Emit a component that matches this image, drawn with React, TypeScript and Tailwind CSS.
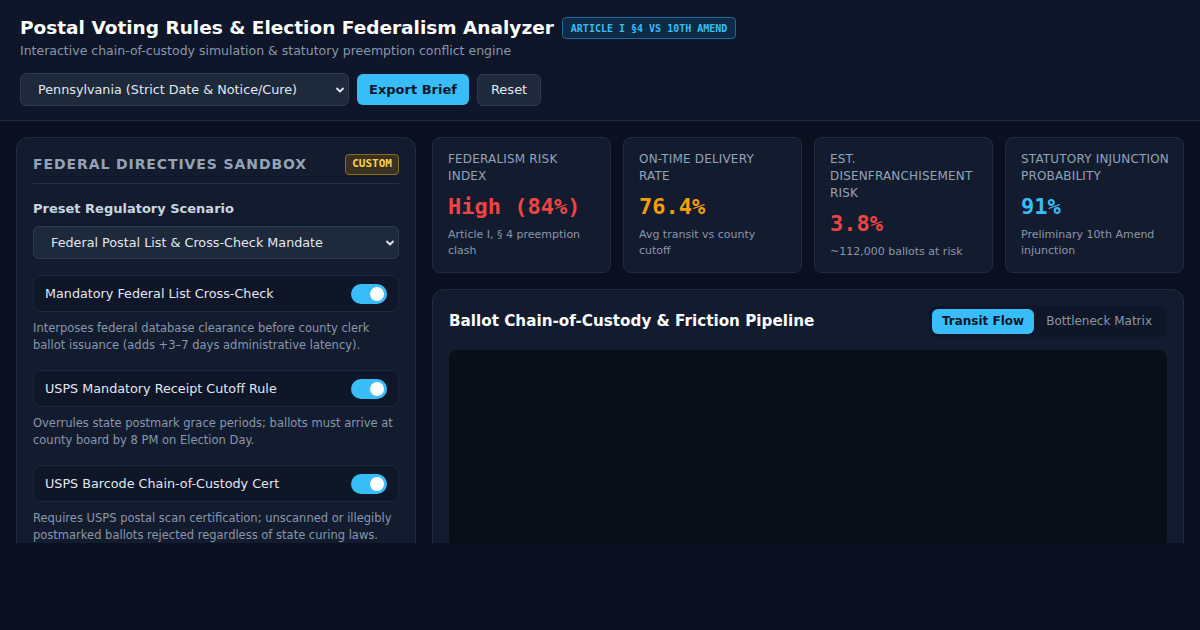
import React from "react";

const sans = { fontFamily: '"DejaVu Sans", "Liberation Sans", sans-serif' };
const mono = { fontFamily: '"DejaVu Sans Mono", "Liberation Mono", monospace' };

function Toggle() {
  return (
    <div className="w-9 h-5 rounded-full bg-[#38bdf8] flex items-center justify-end pr-[3px] shrink-0">
      <div className="w-[14px] h-[14px] rounded-full bg-white" />
    </div>
  );
}

function Chevron({ className = "" }: { className?: string }) {
  return (
    <svg className={className} width="10" height="10" viewBox="0 0 10 10" fill="none">
      <path d="M2 3.5 L5 6.5 L8 3.5" stroke="#e2e8f0" strokeWidth="1.8" strokeLinecap="round" strokeLinejoin="round" />
    </svg>
  );
}

function Rule({ label, desc }: { label: string; desc: string }) {
  return (
    <div className="mt-4">
      <div className="h-[37px] flex items-center justify-between px-[11px] rounded-lg bg-[#0e1628] border border-[#1b2640]">
        <span className="text-[12.75px] text-slate-200">{label}</span>
        <Toggle />
      </div>
      <p className="mt-2 text-[11.5px] leading-[17px] text-[#8a96aa]">{desc}</p>
    </div>
  );
}

function Stat({ label, value, sub, color }: { label: string[]; value: string; sub: string; color: string }) {
  return (
    <div className="rounded-lg bg-[#131c2f] border border-[#1f2b45] pl-[15px] pr-[12px] pt-[13px] pb-3">
      <div className="text-[12px] leading-[17px] tracking-[0.015em] uppercase text-[#94a3b8]">
        {label.map((l) => (
          <div key={l} className="whitespace-nowrap">
            {l}
          </div>
        ))}
      </div>
      <div className={`mt-2 text-[22px] leading-[28px] font-bold ${color}`} style={mono}>
        {value}
      </div>
      <div className="mt-1.5 text-[11px] leading-[16px] text-[#8a96aa]">{sub}</div>
    </div>
  );
}

export default function App() {
  return (
    <div className="w-full h-[630px] bg-[#0b1020]" style={sans}>
      <div className="h-[543px] overflow-hidden">
        <header className="bg-[#0f1629] border-b border-[#1e2a44] px-5 pt-4 pb-[14px]">
          <div className="flex items-center gap-2">
            <h1 className="text-[18.5px] leading-[24px] font-bold text-white">
              Postal Voting Rules &amp; Election Federalism Analyzer
            </h1>
            <span
              className="h-[22px] flex items-center px-2 rounded border border-[#1b6a96] bg-[#0f2a44] text-[10px] font-bold text-[#38bdf8]"
              style={mono}
            >
              ARTICLE I §4 VS 10TH AMEND
            </span>
          </div>
          <p className="mt-[2px] text-[12.5px] leading-[18px] text-[#8a96aa]">
            Interactive chain-of-custody simulation &amp; statutory preemption conflict engine
          </p>
          <div className="mt-[13px] flex items-center gap-2">
            <div className="relative w-[329px] h-[33px] rounded-md bg-[#1e293b] border border-[#2b3b55] flex items-center pl-[17px]">
              <span className="text-[12.75px] text-slate-200">Pennsylvania (Strict Date &amp; Notice/Cure)</span>
              <Chevron className="absolute right-[3px] top-[11px]" />
            </div>
            <button className="h-[31px] px-3 rounded-md bg-[#38bdf8] text-[13px] font-bold text-[#0f172a]">
              Export Brief
            </button>
            <button className="h-[32px] px-[13px] rounded-md bg-[#1e293b] border border-[#2a3954] text-[13px] text-slate-200">
              Reset
            </button>
          </div>
        </header>

        <main className="p-4 flex gap-4 items-start">
          <section className="w-[400px] shrink-0 rounded-xl bg-[#131c2f] border border-[#1f2b45] p-4">
            <div className="flex items-center justify-between pb-2 border-b border-[#243049]">
              <h2 className="text-[14px] font-bold tracking-[0.065em] text-[#94a3b8]">FEDERAL DIRECTIVES SANDBOX</h2>
              <span
                className="h-[21px] flex items-center px-1.5 rounded border border-[#8a6a1f] bg-[#3b3120] text-[11px] font-bold text-[#fcd34d]"
                style={mono}
              >
                CUSTOM
              </span>
            </div>
            <div className="mt-4 text-[13px] leading-[18px] font-bold text-[#cbd5e1]">Preset Regulatory Scenario</div>
            <div className="relative mt-2 h-[33px] rounded-md bg-[#1e293b] border border-[#2b3b55] flex items-center pl-[17px]">
              <span className="text-[12.75px] text-slate-200">Federal Postal List &amp; Cross-Check Mandate</span>
              <Chevron className="absolute right-[3px] top-[11px]" />
            </div>
            <Rule
              label="Mandatory Federal List Cross-Check"
              desc="Interposes federal database clearance before county clerk ballot issuance (adds +3–7 days administrative latency)."
            />
            <Rule
              label="USPS Mandatory Receipt Cutoff Rule"
              desc="Overrules state postmark grace periods; ballots must arrive at county board by 8 PM on Election Day."
            />
            <Rule
              label="USPS Barcode Chain-of-Custody Cert"
              desc="Requires USPS postal scan certification; unscanned or illegibly postmarked ballots rejected regardless of state curing laws."
            />
          </section>

          <div className="flex-1 flex flex-col gap-4">
            <div className="grid grid-cols-4 gap-3">
              <Stat label={["Federalism Risk", "Index"]} value="High (84%)" sub="Article I, § 4 preemption clash" color="text-[#ef4444]" />
              <Stat label={["On-Time Delivery", "Rate"]} value="76.4%" sub="Avg transit vs county cutoff" color="text-[#f59e0b]" />
              <Stat label={["Est.", "Disenfranchisement", "Risk"]} value="3.8%" sub="~112,000 ballots at risk" color="text-[#ef4444]" />
              <Stat label={["Statutory Injunction", "Probability"]} value="91%" sub="Preliminary 10th Amend injunction" color="text-[#38bdf8]" />
            </div>

            <section className="rounded-xl bg-[#131c2f] border border-[#1f2b45] p-4">
              <div className="flex items-center justify-between">
                <h2 className="text-[15.2px] font-bold text-white">Ballot Chain-of-Custody &amp; Friction Pipeline</h2>
                <div className="flex items-center p-[3px] rounded-lg bg-[#0f1627]">
                  <button className="px-2.5 py-1 leading-[17px] rounded-md bg-[#38bdf8] text-[12px] font-bold text-[#0f172a]">
                    Transit Flow
                  </button>
                  <button className="px-3 py-1 leading-[17px] text-[12px] text-[#8a96aa]">Bottleneck Matrix</button>
                </div>
              </div>
              <div className="mt-[13px] h-[360px] rounded-lg bg-[#0a0e19]" />
            </section>
          </div>
        </main>
      </div>
    </div>
  );
}
